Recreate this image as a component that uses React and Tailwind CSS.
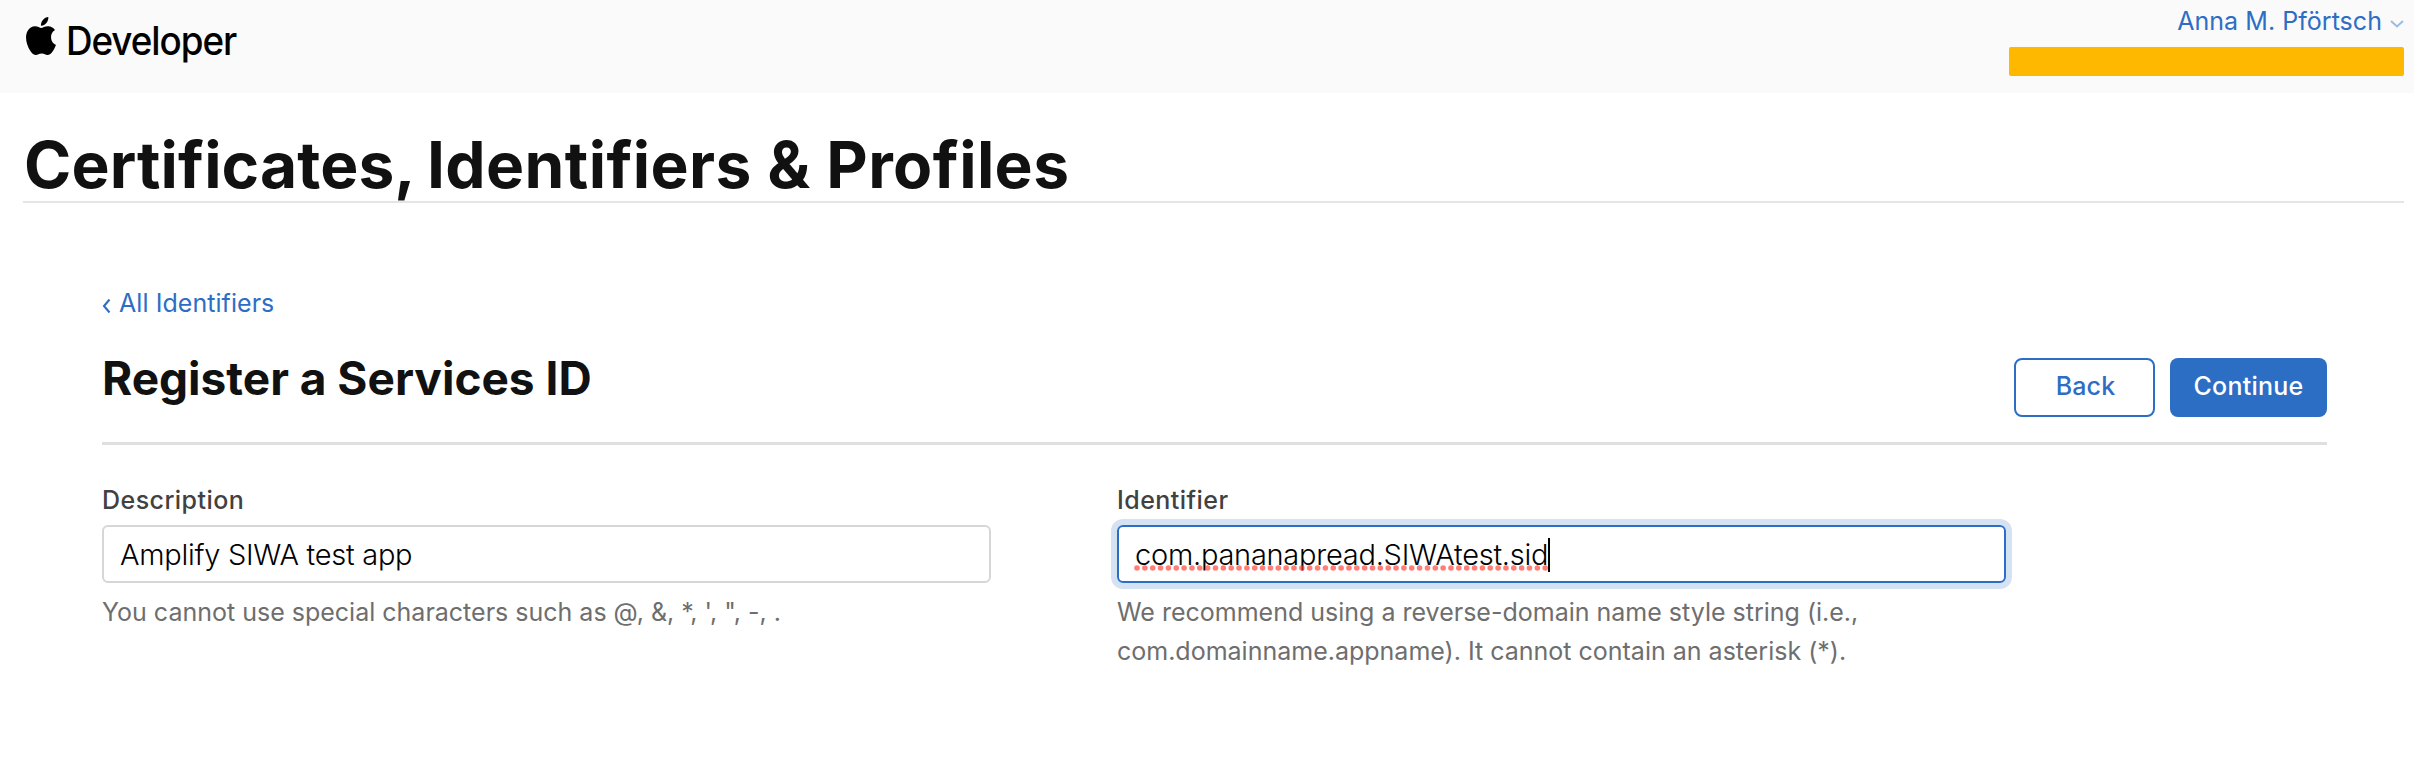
import { SiApple } from "react-icons/si";

const DOT_COUNT = 53;

const Header = () => (
  <header className="flex h-[93px] items-start justify-between bg-[#fafafa] pl-[26px] pr-[10px]">
    <a className="flex items-start text-black">
      <svg viewBox="2.2 0 19.6 24" preserveAspectRatio="none" className="mt-[17px] h-[38px] w-[30px]" fill="currentColor">
        <SiApple size={24} x="0" y="0" />
      </svg>
      <span className="ml-[10px] mt-[17px] inline-block origin-left scale-x-[0.943] whitespace-nowrap text-[39px] font-medium leading-[47px] tracking-[-1.1px]">
        Developer
      </span>
    </a>
    <div className="flex flex-col items-end">
      <div className="flex h-[47px] items-start text-[#2d6ec5]">
        <span className="mt-[2px] whitespace-nowrap text-[25px] leading-[38px] tracking-[0.04px]">Anna M. Pförtsch</span>
        <svg className="ml-[8px] mt-[19px] h-[10px] w-[14px]" viewBox="0 0 14 10" fill="none">
          <path d="M1 2l6 5.5L13 2" stroke="#9bbbe4" strokeWidth="2" />
        </svg>
      </div>
      {/* account name is blanked out */}
      <div className="h-[29px] w-[395px] rounded-[2px] bg-[#ffb800]" />
    </div>
  </header>
);

const Field = ({ label, hint, children }) => (
  <div className="w-[889px]">
    <label className="block text-[25px] font-medium leading-[38px] tracking-[0.45px] text-[#414141]">{label}</label>
    {children}
    <p className="mt-[10px] whitespace-pre-line text-[25px] leading-[39px] text-[#6e6e6e]">{hint}</p>
  </div>
);

// red dotted line under a word the browser does not know
const Spelling = () => (
  <svg className="absolute left-[-1px] top-[29px] h-[6px] w-[420px]" viewBox="0 0 420 6">
    {Array.from({ length: DOT_COUNT }, (_, i) => (
      <circle key={i} cx={3 + i * 7.85} cy="3" r="2.8" fill="#ff3b30" fillOpacity="0.65" />
    ))}
  </svg>
);

export default function App() {
  return (
    <div className="min-h-[772px] bg-white font-['Inter',sans-serif] text-[#111111]">
      <Header />

      <div className="ml-[23px] mr-[10px] border-b-2 border-[#e5e5e5] pl-px pt-9">
        <h1 className="whitespace-nowrap text-[64px] font-bold leading-[72px] tracking-[0.1px]">
          Certificates<span className="tracking-[-4px]">,</span>{" "}
          <span className="tracking-[0.4px]">Identifiers &amp; Profiles</span>
        </h1>
      </div>

      <main className="ml-[102px] mr-[87px] pt-[81px]">
        <a className="flex h-[38px] items-start text-[#2d6ec5]">
          <svg className="mt-[15px] h-[14px] w-[9px]" viewBox="0 0 9 14" fill="none">
            <path d="M7.5 0.5L2 7l5.5 6.5" stroke="currentColor" strokeWidth="2.1" />
          </svg>
          <span className="ml-[8px] text-[25px] leading-[38px] tracking-[0.06px]">All Identifiers</span>
        </a>

        <div className="mt-7 flex items-start justify-between border-b-[3px] border-[#dfdfdf] pb-[25px]">
          <h2 className="text-[46px] font-bold leading-[56px]">Register a Services ID</h2>
          <div className="mt-2 flex gap-[15px]">
            <button className="h-[59px] w-[141px] rounded-lg border-2 border-[#2d6ec5] pb-1 pl-[2px] text-[25px] font-medium leading-[38px] tracking-[0.15px] text-[#2d6ec5]">
              Back
            </button>
            <button className="h-[59px] w-[157px] rounded-lg bg-[#2d6ec5] pb-1 text-[25px] font-medium leading-[38px] tracking-[0.23px] text-white">
              Continue
            </button>
          </div>
        </div>

        <div className="mt-9 flex gap-[126px]">
          <Field label="Description" hint={`You cannot use special characters such as @, &, *, ', ", -, .`}>
            <div className="mt-[6px] flex h-[58px] items-center rounded-md border-2 border-[#d6d6d6] px-4 pt-[2px] text-[29px] font-light leading-[38px] tracking-[-0.27px] text-black">
              Amplify SIWA test app
            </div>
          </Field>
          <Field
            label="Identifier"
            hint={"We recommend using a reverse-domain name style string (i.e.,\ncom.domainname.appname). It cannot contain an asterisk (*)."}
          >
            <div className="mt-[6px] flex h-[58px] items-center rounded-md border-2 border-[#2d6ec5] px-4 pt-[2px] text-[29px] font-light leading-[38px] tracking-[-0.25px] text-black shadow-[0_0_0_6px_#d5e2f4]">
              <span className="relative whitespace-nowrap">
                com.pananapread.SIWAtest.sid
                <Spelling />
              </span>
              <span className="h-[34px] w-[2px] bg-black" />
            </div>
          </Field>
        </div>
      </main>
    </div>
  );
}
